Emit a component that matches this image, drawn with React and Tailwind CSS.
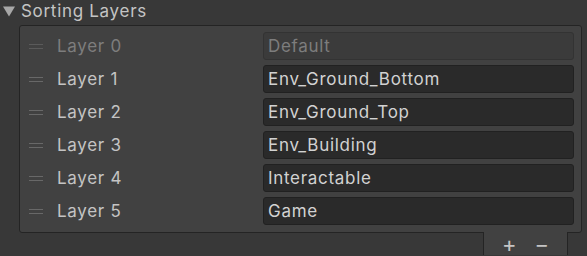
const LAYERS = [
  { label: 'Layer 0', name: 'Default', locked: true },
  { label: 'Layer 1', name: 'Env_Ground_Bottom' },
  { label: 'Layer 2', name: 'Env_Ground_Top' },
  { label: 'Layer 3', name: 'Env_Building' },
  { label: 'Layer 4', name: 'Interactable' },
  { label: 'Layer 5', name: 'Game' },
];

function Handle({ dim }) {
  return (
    <div className="w-[14px] flex flex-col gap-[3px]">
      <div className={`h-px ${dim ? 'bg-[#5a5a5a]' : 'bg-[#686868]'}`} />
      <div className={`h-px ${dim ? 'bg-[#5a5a5a]' : 'bg-[#686868]'}`} />
    </div>
  );
}

function LayerRow({ layer }) {
  return (
    <div className="flex items-center h-[28px]">
      <div className="w-[37px] pl-[9px]">
        <Handle dim={layer.locked} />
      </div>
      <div
        className={`w-[206px] text-[17px] tracking-[0.7px] leading-none ${layer.locked ? 'text-[#7d7d7d]' : 'text-[#c4c4c4]'}`}
      >
        {layer.label}
      </div>
      <div
        className={`flex-1 h-[28px] rounded-[3px] border flex items-center pl-[4px] text-[17px] tracking-[0.7px] leading-none ${
          layer.locked
            ? 'bg-[#3b3b3b] border-[#333333] text-[#7d7d7d]'
            : 'bg-[#2a2a2a] border-[#212121] text-[#d2d2d2]'
        }`}
      >
        {layer.name}
      </div>
    </div>
  );
}

export default function App() {
  return (
    <div
      className="w-[587px] h-[256px] bg-[#383838] overflow-hidden"
      style={{ fontFamily: 'Inter, "Noto Sans", sans-serif' }}
    >
      {/* Header */}
      <div className="h-[25px] flex items-center pl-[3px] gap-[6px] pb-[2px]">
        <svg width="12" height="11" viewBox="0 0 12 11">
          <path d="M0 0.5 L12 0.5 L6 10.5 Z" fill="#a8a8a8" />
        </svg>
        <span className="text-[17px] tracking-[0.7px] leading-none text-[#c4c4c4]">Sorting Layers</span>
      </div>

      {/* List */}
      <div className="ml-[19px] mr-[5px] border border-[#242424] rounded-[3px] bg-[#414141] pt-[6px] pb-[7px] pr-[7px] flex flex-col gap-[5px]">
        {LAYERS.map((l) => (
          <LayerRow key={l.label} layer={l} />
        ))}
      </div>

      {/* Footer */}
      <div className="flex justify-end pr-[19px]">
        <div className="w-[85px] h-[23px] bg-[#414141] border-x border-[#242424] flex items-center justify-center gap-[18px] -mt-px">
          <span className="text-[22px] leading-none text-[#c4c4c4]">+</span>
          <span className="text-[22px] leading-none text-[#c4c4c4]">−</span>
        </div>
      </div>
    </div>
  );
}
